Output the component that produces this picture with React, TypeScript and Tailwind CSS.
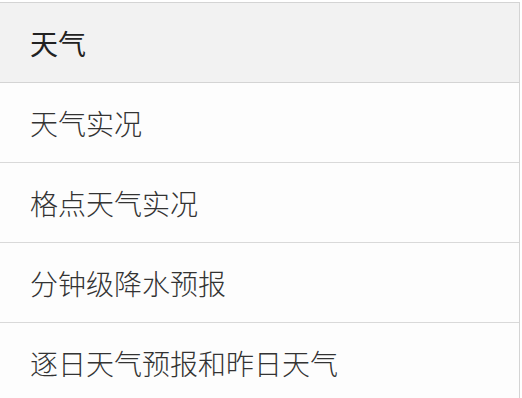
import React from 'react';

const items = ['天气实况', '格点天气实况', '分钟级降水预报', '逐日天气预报和昨日天气'];

function App() {
  return (
    <div className="h-[398px] w-[522px] overflow-hidden bg-white font-['Noto_Sans_CJK_SC',sans-serif]">
      <div className="mt-[2px] w-[520px] border-t border-r border-[#d4d4d4]">
        <div className="flex h-[80px] items-center border-b border-[#d4d4d4] bg-[#f2f2f2] pl-[30px] text-[28px] font-normal text-[#222]">
          天气
        </div>
        {items.map((label) => (
          <div
            key={label}
            className="flex h-[80px] items-center border-b border-[#d9d9d9] bg-[#fdfdfd] pl-[30px] text-[28px] font-light text-[#333]"
          >
            {label}
          </div>
        ))}
      </div>
    </div>
  );
}

export default App;
